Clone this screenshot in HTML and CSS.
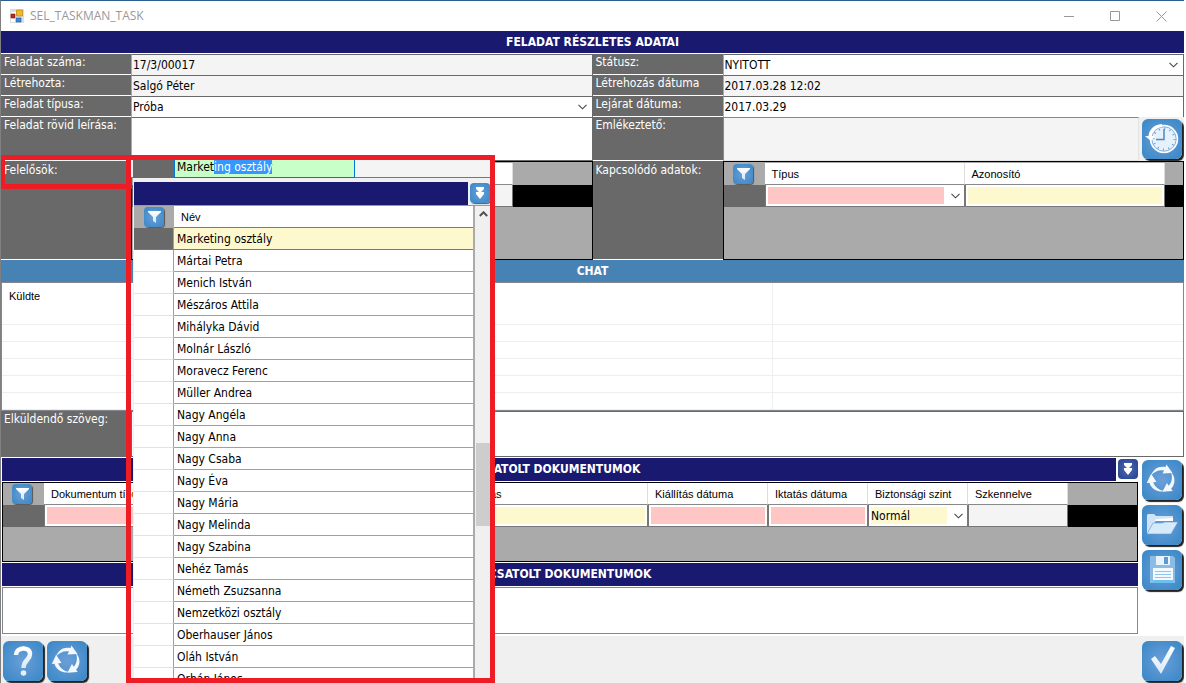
FILE: index.html
```html
<!DOCTYPE html>
<html lang="hu">
<head>
<meta charset="utf-8">
<title>SEL_TASKMAN_TASK</title>
<link rel="stylesheet" href="styles.css">
</head>
<body>
<svg class="defs" aria-hidden="true">
  <defs>
    <linearGradient id="fade" x1="0" y1="0" x2="0" y2="1"><stop offset="0" stop-color="#fff"/><stop offset="1" stop-color="#d6e8f8"/></linearGradient>
    <symbol id="i-filter" viewBox="0 0 20 20"><path fill="url(#fade)" d="M4 4h13v1l-5 5v6l-3-2v-4L4 5z"/></symbol>
    <symbol id="i-down" viewBox="0 0 20 20"><path fill="#fff" d="M6 4h8v2l-3 3h3v2l-4 5-4-5V9h3L6 6z"/></symbol>
    <symbol id="i-chev" viewBox="0 0 9 6"><path fill="none" stroke="#444" stroke-width="1.1" d="M.5.8l4 4 4-4"/></symbol>
    <symbol id="i-refresh" viewBox="0 0 40 40">
      <g fill="#f2f8fd">
        <path d="M9 15.500C11 9 17 5.500 23.500 7L24.500 4.500 30.500 13 20.500 13.500 22 10.500C17 9.500 12.500 11.500 9 15.500z"/>
        <path d="M9 15.500C11 9 17 5.500 23.500 7L24.500 4.500 30.500 13 20.500 13.500 22 10.500C17 9.500 12.500 11.500 9 15.500z" transform="rotate(120 20 19.500)"/>
        <path d="M9 15.500C11 9 17 5.500 23.500 7L24.500 4.500 30.500 13 20.500 13.500 22 10.500C17 9.500 12.500 11.500 9 15.500z" transform="rotate(240 20 19.500)"/>
      </g>
    </symbol>
    <symbol id="i-help" viewBox="0 0 40 40"><path fill="none" stroke="url(#fade)" stroke-width="4.500" d="M13 14c0-8 14-9 14-1 0 6-6.500 6-6.500 14"/><circle cx="20.500" cy="32" r="2.800" fill="#e4f0fa"/></symbol>
    <symbol id="i-check" viewBox="0 0 40 40"><path fill="url(#fade)" d="M9 18l4-3 6 8L29 5l4 2-14 26z"/></symbol>
    <symbol id="i-folder" viewBox="0 0 40 40">
      <path fill="#cfe4f7" d="M5 29V10l1-1h6l2 2h17v4H14L8 29z"/>
      <path fill="#fff" d="M14 14l17-1v3H13z"/>
      <path fill="#d7eafa" stroke="#5b9ad4" stroke-width=".6" d="M5 29l6-11h9l3-1h13l-7 12z"/>
    </symbol>
    <symbol id="i-save" viewBox="0 0 40 40">
      <path fill="#8bbce6" d="M8 6h23l2 2v25H8z"/>
      <path fill="#e8f3fc" d="M14 6h14v9H14z"/><path fill="#5a9bd6" d="M22 7h4v7h-4z"/>
      <path fill="#f2f9ff" d="M11 18h20v12H11z"/><path fill="#6ec0f0" d="M11 30h20v3H11z"/>
      <path stroke="#8fc4ec" d="M13 21.500h16M13 24.500h16M13 27.500h16"/>
    </symbol>
    <symbol id="i-clock" viewBox="0 0 40 40">
      <circle cx="22" cy="20" r="13.500" fill="#e6f1fb" stroke="#fff" stroke-width="1.500"/>
      <circle cx="22" cy="20" r="12.200" fill="none" stroke="#5f9ad2" stroke-width=".7"/>
      <circle cx="22" cy="20" r="10.500" fill="none" stroke="#5f9ad2" stroke-width="2" stroke-dasharray="1 4.498"/>
      <path fill="none" stroke="#4a88c4" stroke-width="1.500" d="M22 10v10.500h-8"/>
      <path fill="none" stroke="#fff" stroke-width="3" d="M20 6.500C12 7 8 12 8 18"/>
      <path fill="#fff" d="M3 17h10l-4 5z"/>
    </symbol>
  </defs>
</svg>

<div class="window">
  <header class="titlebar">
    <svg class="app-icon" viewBox="0 0 14 14" aria-hidden="true">
      <path fill="#ddd" d="M0 0h14v14H0z"/><path fill="#fff" d="M1 3h5v10H1z"/>
      <path fill="#f5b921" stroke="#b87a00" stroke-width=".6" d="M6.500 1h6v6h-6z"/>
      <path fill="#c0261c" stroke="#7b130d" stroke-width=".6" d="M1 5h4v4H1z"/>
      <path fill="#3d86e0" stroke="#1d57a8" stroke-width=".6" d="M6 9h5v4H6z"/>
    </svg>
    <h1>SEL_TASKMAN_TASK</h1>
    <div class="win-buttons">
      <button type="button" aria-label="Kis méret"><svg viewBox="0 0 11 11"><path d="M0 5.500h10"/></svg></button>
      <button type="button" aria-label="Teljes méret"><svg viewBox="0 0 11 11"><path d="M.5.5h9v9h-9z"/></svg></button>
      <button type="button" aria-label="Bezárás"><svg viewBox="0 0 11 11"><path d="M.5.5l10 10M10.500.5l-10 10"/></svg></button>
    </div>
  </header>

  <h2 class="bar main-bar">FELADAT RÉSZLETES ADATAI</h2>

  <section class="form">
    <label class="lbl" for="num">Feladat száma:</label>
    <input class="field ro" id="num" value="17/3/00017" readonly>
    <label class="lbl" for="status">Státusz:</label>
    <div class="field combo"><select id="status"><option>NYITOTT</option></select><svg class="chev"><use href="#i-chev"/></svg></div>

    <label class="lbl" for="creator">Létrehozta:</label>
    <input class="field ro" id="creator" value="Salgó Péter" readonly>
    <label class="lbl" for="created">Létrehozás dátuma</label>
    <input class="field ro" id="created" value="2017.03.28 12:02" readonly>

    <label class="lbl" for="type">Feladat típusa:</label>
    <div class="field combo"><select id="type"><option>Próba</option></select><svg class="chev"><use href="#i-chev"/></svg></div>
    <label class="lbl" for="due">Lejárat dátuma:</label>
    <input class="field" id="due" value="2017.03.29">

    <label class="lbl" for="desc">Feladat rövid leírása:</label>
    <textarea class="field" id="desc"></textarea>
    <label class="lbl" for="remind">Emlékeztető:</label>
    <div class="remind">
      <textarea class="field ro sunken" id="remind" readonly></textarea>
      <button class="ico" type="button" aria-label="Emlékeztető"><svg><use href="#i-clock"/></svg></button>
    </div>

    <label class="lbl tall" for="owner">Felelősök:</label>
    <div class="grid-box">
      <table class="grid">
        <thead><tr><th class="c-head"></th><th class="c-owner"></th><th class="rest"></th></tr></thead>
        <tbody><tr><td class="mark"></td><td class="ro"></td><td class="void"></td></tr></tbody>
      </table>
    </div>
    <span class="lbl tall">Kapcsolódó adatok:</span>
    <div class="grid-box">
      <table class="grid">
        <thead><tr>
          <th class="c-head"><button class="ico sm" type="button" aria-label="Szűrő"><svg><use href="#i-filter"/></svg></button></th>
          <th class="c-200">Típus</th><th class="c-200">Azonosító</th><th class="rest"></th>
        </tr></thead>
        <tbody><tr>
          <td class="mark"></td>
          <td><div class="combo cell pink"><select aria-label="Típus"><option></option></select><svg class="chev"><use href="#i-chev"/></svg></div></td>
          <td><input class="cell yellow" aria-label="Azonosító"></td><td class="void"></td>
        </tr></tbody>
      </table>
    </div>
  </section>

  <h2 class="bar chat-bar">CHAT</h2>
  <div class="chat">
    <table>
      <thead><tr><th class="c-from">Küldte</th><th></th></tr></thead>
      <tbody>
        <tr><td></td><td></td></tr><tr><td></td><td></td></tr><tr><td></td><td></td></tr>
        <tr><td></td><td></td></tr><tr><td></td><td></td></tr><tr><td></td><td></td></tr>
      </tbody>
    </table>
  </div>

  <div class="send">
    <label class="lbl" for="msg">Elküldendő szöveg:</label>
    <textarea class="field" id="msg"></textarea>
  </div>

  <section class="docs">
    <div class="docs-main">
      <div class="bar-row">
        <h2 class="bar">CSATOLT DOKUMENTUMOK</h2>
        <button class="ico sm dark" type="button" aria-label="Lenyitás"><svg><use href="#i-down"/></svg></button>
      </div>
      <div class="grid-box doc-grid">
        <table class="grid">
          <thead><tr>
            <th class="c-head"><button class="ico sm" type="button" aria-label="Szűrő"><svg><use href="#i-filter"/></svg></button></th>
            <th class="c-420">Dokumentum típusa</th><th class="c-184">Leírás</th>
            <th class="c-120">Kiállítás dátuma</th><th class="c-100">Iktatás dátuma</th><th class="c-100">Biztonsági szint</th><th class="c-100">Szkennelve</th><th class="rest"></th>
          </tr></thead>
          <tbody><tr>
            <td class="mark"></td>
            <td><input class="cell pink" aria-label="Dokumentum típusa"></td>
            <td><input class="cell yellow" aria-label="Leírás"></td>
            <td><input class="cell pink" aria-label="Kiállítás dátuma"></td>
            <td><input class="cell pink" aria-label="Iktatás dátuma"></td>
            <td><div class="combo cell yellow"><select aria-label="Biztonsági szint"><option>Normál</option></select><svg class="chev"><use href="#i-chev"/></svg></div></td>
            <td class="ro"></td><td class="void"></td>
          </tr></tbody>
        </table>
      </div>
      <h2 class="bar">CSATOLT DOKUMENTUMOK</h2>
      <div class="doc-list"></div>
    </div>
    <div class="side">
      <button class="ico" type="button" aria-label="Frissítés"><svg><use href="#i-refresh"/></svg></button>
      <button class="ico" type="button" aria-label="Megnyitás"><svg><use href="#i-folder"/></svg></button>
      <button class="ico" type="button" aria-label="Mentés"><svg><use href="#i-save"/></svg></button>
    </div>
  </section>

  <footer class="footer">
    <button class="ico" type="button" aria-label="Súgó"><svg><use href="#i-help"/></svg></button>
    <button class="ico" type="button" aria-label="Frissítés"><svg><use href="#i-refresh"/></svg></button>
    <button class="ico ok" type="button" aria-label="Rendben"><svg><use href="#i-check"/></svg></button>
  </footer>

  <div class="label-mark"></div>
  <div class="popup">
    <div class="edit-row">
      <span class="edit-mark"></span>
      <input id="owner" value="Marketing osztály">
      <span class="edit-rest"></span>
    </div>
    <div class="popup-body">
      <div class="bar-row"><div class="bar"></div><button class="ico sm" type="button" aria-label="Lenyitás"><svg><use href="#i-down"/></svg></button></div>
      <div class="list-row">
        <table class="names">
          <thead><tr><th class="c-pick"><button class="ico sm" type="button" aria-label="Szűrő"><svg><use href="#i-filter"/></svg></button></th><th>Név</th></tr></thead>
          <tbody>
            <tr class="sel"><td></td><td>Marketing osztály</td></tr>
            <tr><td></td><td>Mártai Petra</td></tr>
            <tr><td></td><td>Menich István</td></tr>
            <tr><td></td><td>Mészáros Attila</td></tr>
            <tr><td></td><td>Mihályka Dávid</td></tr>
            <tr><td></td><td>Molnár László</td></tr>
            <tr><td></td><td>Moravecz Ferenc</td></tr>
            <tr><td></td><td>Müller Andrea</td></tr>
            <tr><td></td><td>Nagy Angéla</td></tr>
            <tr><td></td><td>Nagy Anna</td></tr>
            <tr><td></td><td>Nagy Csaba</td></tr>
            <tr><td></td><td>Nagy Éva</td></tr>
            <tr><td></td><td>Nagy Mária</td></tr>
            <tr><td></td><td>Nagy Melinda</td></tr>
            <tr><td></td><td>Nagy Szabina</td></tr>
            <tr><td></td><td>Nehéz Tamás</td></tr>
            <tr><td></td><td>Németh Zsuzsanna</td></tr>
            <tr><td></td><td>Nemzetközi osztály</td></tr>
            <tr><td></td><td>Oberhauser János</td></tr>
            <tr><td></td><td>Oláh István</td></tr>
            <tr><td></td><td>Orbán János</td></tr>
          </tbody>
        </table>
        <div class="scroll"><svg class="up" viewBox="0 0 9 6"><path fill="none" stroke="#505050" stroke-width="2" d="M.8 5l3.700-3.700L8.200 5"/></svg><div class="thumb"></div></div>
      </div>
    </div>
  </div>
</div>
<script src="app.js"></script>
</body>
</html>
```

FILE: styles.css
```css
* { box-sizing: border-box; }
html, body { margin: 0; }
body {
  height: 100vh;
  background: #fff;
  color: #000;
  font: 12px/14px "DejaVu Sans Condensed", "Noto Sans", sans-serif;
}
.defs { position: absolute; width: 0; height: 0; }
h1, h2 { margin: 0; font: inherit; }
button { padding: 0; border: 0; background: none; }
input, select, textarea {
  display: block; min-width: 0; width: 100%; margin: 0; padding: 0 2px;
  border: 0; border-radius: 0; outline: 0; background: #fff;
  color: #000; font: inherit; resize: none; appearance: none;
}
table { border-collapse: separate; border-spacing: 0; table-layout: fixed; width: 100%; }
th, td { padding: 0; text-align: left; font-weight: 400; }

.window {
  position: relative; display: flex; flex-direction: column;
  min-height: 100vh; margin-right: 2px; overflow: hidden;
  border-left: 1px solid #808080; border-top: 1px solid #2b5f8f;
}
.titlebar { display: flex; align-items: center; height: 30px; padding-left: 9px; color: #999; }
.titlebar h1 { flex: 1; font: 12px/16px "Open Sans", sans-serif; }
.app-icon { width: 14px; height: 14px; margin-right: 6px; }
.win-buttons { display: flex; }
.win-buttons button { display: grid; place-items: center; width: 46px; height: 28px; }
.win-buttons svg { width: 11px; height: 11px; fill: none; stroke: #999; }

.bar {
  flex: 1; height: 23px; background: #19196f; color: #fff;
  font-weight: 700; line-height: 23px; text-align: center;
}
.main-bar { flex: none; height: 22px; margin-bottom: 1px; }
.bar-row { display: flex; }
.bar-row .ico { margin: 1px 0 0 2px; }

.form { display: grid; grid-template-columns: 130px 1fr 130px 1fr; grid-template-rows: 21px 21px 21px 44px 99px; }
.lbl { padding: 1px 3px; background: #696969; color: #fff; border-bottom: 1px solid #fff; }
.lbl.tall { padding-top: 2px; }
.field { height: 100%; border: 1px solid #696969; border-width: 1px 1px 0 1px; }
.form .field { border-left-color: #aaa; padding: 0 1px; }
.form textarea.field { border-bottom: 1px solid #696969; }
.ro { background: #f4f4f4; }
.combo { display: grid; background: #fff; }
.combo > * { grid-area: 1 / 1; }
.combo select { padding: 0; }
.chev { align-self: center; justify-self: end; width: 9px; height: 6px; margin-right: 4px; pointer-events: none; }
.remind { display: flex; background: #f0f0f0; }
.remind .field { flex: 1; margin-right: 3px; }
.form .remind .sunken { border: 1px solid #888; border-right-color: #e3e3e3; border-bottom-color: #e3e3e3; }
.remind .ico { margin: 2px 2px 0 0; }

.ico {
  display: block; flex: none; width: 40px; height: 40px;
  border-radius: 6px; background: radial-gradient(#6b9fd8, #3f8ac9 85%);
  box-shadow: 2px 2px 1px #222;
}
.ico svg { display: block; width: 100%; height: 100%; }
.ico.sm { width: 20px; height: 20px; border-radius: 4px; box-shadow: 1px 1px 1px #555; }
.ico.dark { background: radial-gradient(#4a6bb5, #27408c); box-shadow: none; }

.grid-box { border: 1px solid #000; background: #aaa; overflow: hidden; }
.grid { margin-top: 1px; font-size: 11px; }
.doc-grid .grid { margin-top: 0; }
.grid th { height: 22px; padding-left: 7px; background: #fff; border-right: 1px solid #ddd; border-bottom: 1px solid #888; font-family: "Liberation Sans", Arial, sans-serif; }
.grid th.c-head { width: 41px; padding: 0 9px; background: #aaa; border: 0; }
.grid th.rest { width: auto; padding: 0; background: #aaa; border: 0; }
.grid .ico { margin: 0; }
.grid td { height: 22px; border: 1px solid #777; border-top: 0; }
.grid td.mark { background: #696969; border: 0; }
.grid td.void { background: #000; border: 0; }
.c-owner { width: 340px; }
.c-200 { width: 200px; }
.c-420 { width: 420px; }
.c-184 { width: 184px; }
.c-120 { width: 120px; }
.c-100 { width: 100px; }
.cell { height: 21px; border: 2px solid #fff; font-size: 12px; }
.pink, .pink select { background: #ffc6c6; }
.yellow, .yellow select { background: #fef8cf; }
.combo.cell { background: #fff; grid-template-columns: 1fr 18px; }
.combo.cell .chev { grid-column: 2; margin-right: 2px; }

.chat-bar { flex: none; height: 22px; line-height: 22px; background: #4682b4; }
.chat { flex: 1 0 129px; border: 1px solid #828790; }
.chat th { height: 25px; padding-left: 7px; font: 11px/14px "Liberation Sans", Arial, sans-serif; border-right: 1px solid #eee; }
.chat th:last-child, .chat td:last-child { border-right: 0; }
.chat .c-from { width: 771px; }
.chat td { height: 17px; border-right: 1px solid #eee; border-bottom: 1px solid #eee; }

.send { display: grid; grid-template-columns: 130px 1fr; height: 46px; }
.send .lbl { border-bottom: 0; }
.send .field { border-bottom-width: 1px; }

.docs { display: flex; padding: 1px 2px 2px 1px; }
.docs-main { flex: 1; min-width: 0; margin-right: 4px; }
.doc-grid { height: 80px; margin: 1px 0; }
.doc-list { height: 47px; margin: 1px 0 0; border: 1px solid #828790; }
.side { display: flex; flex-direction: column; gap: 5px; padding-top: 2px; }

.footer { display: flex; gap: 4px; height: 47px; padding: 5px 2px 0; background: #f0f0f0; }
.footer .ok { margin-left: auto; }

.label-mark { position: absolute; left: -1px; top: 154px; width: 132px; height: 34px; border: 5px solid #ee1c24; }
.popup { position: absolute; left: 125px; top: 154px; bottom: 0; width: 369px; display: flex; flex-direction: column; border: 5px solid #ee1c24; overflow: hidden; }
.edit-row { display: grid; grid-template-columns: 41px 181px 1fr; height: 18px; padding-left: 2px; background: #f4f4f4; border-bottom: 1px solid #777; }
.edit-mark { background: #696969; }
.edit-row input { height: 18px; padding: 0 0 3px 2px; border: 1px solid #0078d7; border-width: 0 1px 1px; background: #c8ffc8; }
.edit-row input::selection { background: #3399ff; color: #fff; }
.popup-body { flex: 1; min-height: 0; display: flex; flex-direction: column; margin-left: 2px; padding: 4px 0 0 1px; background: #f0f0f0; }
.list-row { flex: 1; min-height: 0; display: flex; overflow: hidden; border-top: 1px solid #999; }
.names { flex: 1; align-self: flex-start; background: #fff; border-right: 2px solid #aaa; }
.names th { height: 22px; padding-left: 7px; border-bottom: 1px solid #3f8ac9; font: 11px/14px "Liberation Sans", Arial, sans-serif; }
.names th.c-pick { width: 40px; padding: 0 10px; background: #aaa; border-bottom-color: #aaa; }
.names .ico { margin: 0; }
.names td { height: 22px; padding-left: 3px; border-bottom: 1px solid #a0a0a0; }
.names td:first-child { border-right: 1px solid #a0a0a0; border-bottom-color: #e3e3e3; }
.names .sel td { background: #fef8cf; border-bottom-color: #777; }
.names .sel td:first-child { background: #696969; }
.scroll { width: 15px; background: #f0f0f0; }
.scroll .up { display: block; width: 9px; height: 6px; margin: 5px 0 0 4px; }
.thumb { height: 83px; margin: 226px 0 0 1px; background: #cdcdcd; }
```

FILE: app.js
```js
const owner = document.getElementById("owner");
owner.focus();
owner.setSelectionRange(6, owner.value.length);
```
